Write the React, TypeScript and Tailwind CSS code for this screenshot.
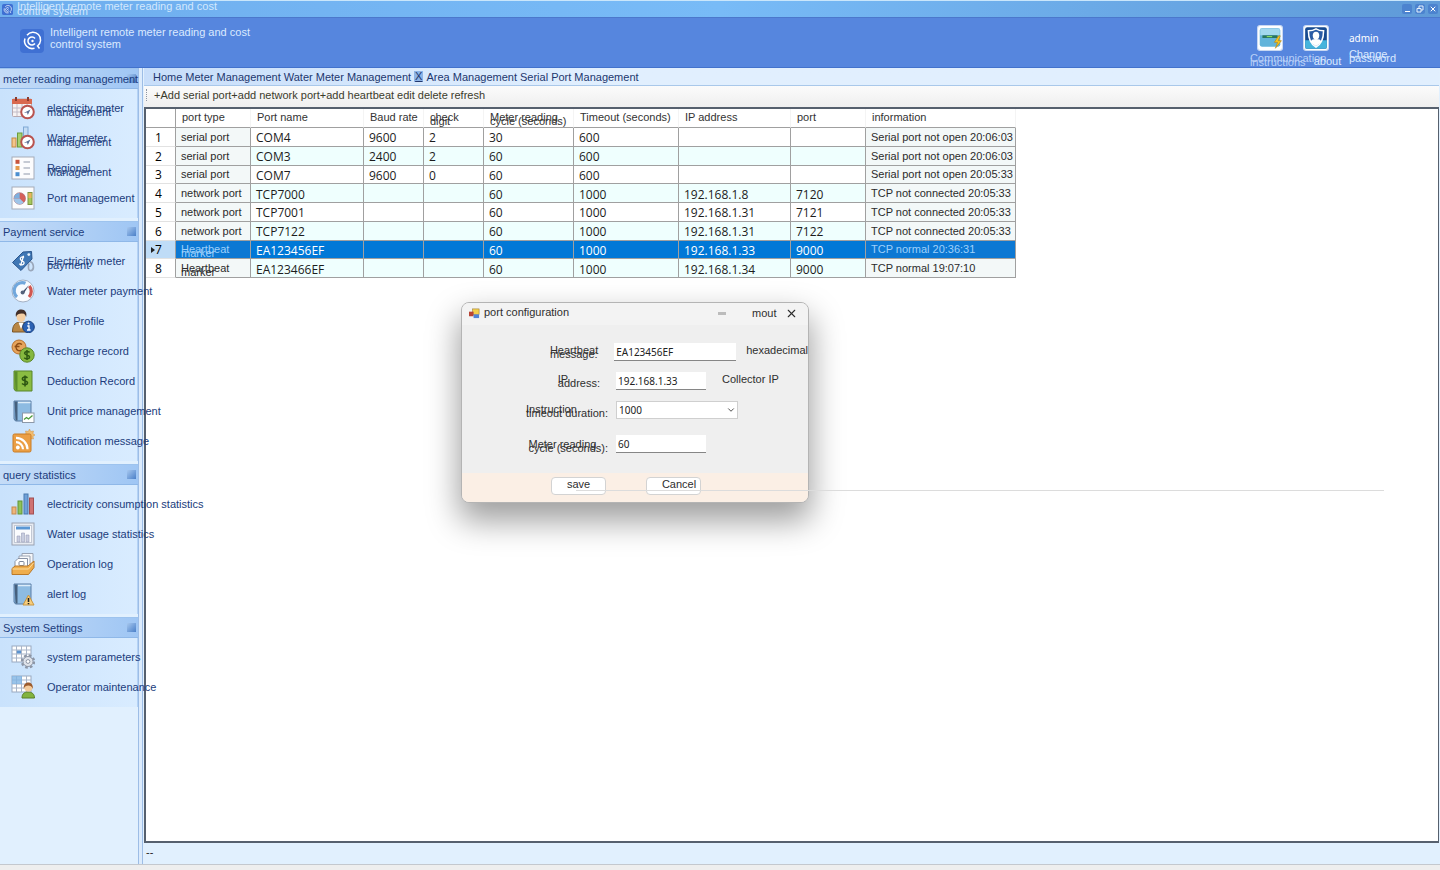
import React from 'react';
import { ChevronDown, X } from 'lucide-react';

type IconProps = { children: React.ReactNode; size?: string };

const Svg: React.FC<IconProps> = ({ children, size = 'size-6' }) => (
  <svg viewBox="0 0 24 24" className={`${size} shrink-0`} fill="none" aria-hidden="true">
    {children}
  </svg>
);

const Clock = () => (
  <>
    <circle cx="16.5" cy="16" r="6.3" fill="#fff" stroke="#b9534f" strokeWidth="2" />
    <path d="M12.8 17l6.6-3.4-2.6 5.4-.8-2.4z" fill="#5b6f96" />
  </>
);

const CalendarIcon = () => (
  <Svg>
    <rect x="1.5" y="3" width="19" height="17.5" rx="1" fill="#f7f3f3" stroke="#b7a9b0" />
    <path d="M1 3h20v5H1z" fill="#d9694f" />
    <path d="M5 1v4M17 1v4" stroke="#8d3b2d" strokeWidth="2" />
    <path d="M2 12h18M2 16h18M6 8v12M11 8v12M16 8v12" stroke="#c1bcc8" />
    <Clock />
  </Svg>
);

const BarsClockIcon = () => (
  <Svg>
    <rect x="1" y="12" width="4" height="9" fill="#f3c58b" stroke="#c58a44" />
    <rect x="6.5" y="7" width="4.5" height="14" fill="#a8d070" stroke="#6a9c3c" />
    <rect x="12.5" y="1" width="4.5" height="20" fill="#c4dcf4" stroke="#7fa8d4" />
    <Clock />
  </Svg>
);

const ListIcon = () => (
  <Svg>
    <rect x="1" y="1" width="22" height="22" fill="#fcfcfd" stroke="#a5abb8" />
    <rect x="4.5" y="3.8" width="4" height="4" fill="#c8553d" />
    <rect x="4.5" y="10" width="4" height="4" fill="#e59a4c" />
    <rect x="4.5" y="16.2" width="4" height="4" fill="#4c8fd0" />
    <path d="M12.5 6H19M12.5 12H19M12.5 18H19" stroke="#8f98aa" />
  </Svg>
);

const PieBarIcon = () => (
  <Svg>
    <rect x="1" y="1" width="22" height="22" fill="#fcfcfd" stroke="#a5abb8" />
    <circle cx="8.7" cy="12.5" r="5.8" fill="#d5605b" stroke="#a35f6c" strokeWidth=".6" />
    <path d="M8.7 12.5V6.700a5.800 5.800 0 0 0-5.800 5.800z" fill="#7eb0df" />
    <path d="M8.7 12.5H2.900a5.800 5.800 0 0 0 9.900 4.100z" fill="#9ec4e8" />
    <rect x="17" y="6.5" width="4" height="12" fill="#a6c85c" stroke="#7c9440" />
    <path d="M17.5 7h3v5h-3z" fill="#ecb25a" />
  </Svg>
);

const TagIcon = () => (
  <Svg>
    <path d="M19 12.500c4 1 4.500 8 1.500 9s-4-3-2.500-7" stroke="#9aa7ba" strokeWidth="1.600" />
    <path d="M1.500 13.500L12 3l8.500-.5L21 10 10 21.500z" fill="#3f77b5" stroke="#2a558c" />
    <circle cx="17.800" cy="5.600" r="1.400" fill="#e9f2fb" />
    <path d="M13 8.500c-2-1.200-4.300 0-3.500 2s4 1.500 3.600 3.600-3 2.400-4.800.7M12.600 6.800l-3 9.800" stroke="#fff" strokeWidth="1.300" />
  </Svg>
);

const GaugeIcon = () => (
  <Svg>
    <circle cx="12" cy="12" r="11" fill="#f8fbff" stroke="#a4b1c4" />
    <path d="M6 18A8.200 8.200 0 0 1 14.500 4.200" stroke="#71a7dc" strokeWidth="3.200" />
    <path d="M18.300 7a8.200 8.200 0 0 1-.3 11" stroke="#d0564f" strokeWidth="3.200" />
    <path d="M10.500 13.800L18 6l-5.500 9z" fill="#3f4c66" />
    <circle cx="11.600" cy="13.500" r="2" fill="#53617a" />
  </Svg>
);

const UserInfoIcon = () => (
  <Svg>
    <path d="M1.500 23c0-6 2-8.500 5-9.500h7c3.500 1 5 4 5 9.500z" fill="#b98745" stroke="#7a5527" />
    <path d="M7.500 13.500L10 20l2.800-6.500z" fill="#fff" />
    <ellipse cx="10" cy="7.500" rx="4.500" ry="5.500" fill="#f5cfa3" />
    <path d="M5 8C3.800 3 7 .3 10.500.5s5.800 3 4.600 7.500c-1-3-2-3.500-4.600-3.500S6 5 5 8z" fill="#43302a" />
    <circle cx="17.500" cy="18" r="5.800" fill="#2c62b4" stroke="#173f80" />
    <path d="M16.300 17h1.700v4M16 21h3.600" stroke="#fff" strokeWidth="1.300" />
    <circle cx="17.600" cy="14.600" r="1" fill="#fff" />
  </Svg>
);

const CoinsIcon = () => (
  <Svg>
    <circle cx="8" cy="8" r="7" fill="#e6a45c" stroke="#b9702c" />
    <path d="M11 5.500c-4-2.600-6.300.5-6 3s3 4.200 5.500 2.500M3.600 7.500H8.500" stroke="#8d4c15" strokeWidth="1.400" />
    <circle cx="16" cy="16" r="7.200" fill="#86b83f" stroke="#5b8726" />
    <path d="M18.600 13.300c-2-1.600-5-.8-5 1s5 1.700 5 3.700-3.400 2.500-5.400.7M16 11v10" stroke="#2f5a12" strokeWidth="1.500" />
  </Svg>
);

const GreenBookIcon = () => (
  <Svg>
    <path d="M3 2h18v20H4.500L3 20z" fill="#8abc42" stroke="#58852a" />
    <path d="M3.500 2.500h3v19h-2z" fill="#5d8f2c" />
    <path d="M16.500 8.800c-2-1.600-5.200-.8-5.200 1.100s5.300 1.800 5.300 3.900-3.600 2.500-5.600.7M14 6.500v11" stroke="#2d5612" strokeWidth="1.600" />
  </Svg>
);

const BlueBook = () => (
  <>
    <path d="M3 2h17v20H4.500L3 20z" fill="#8dbbe2" stroke="#5a7da5" />
    <path d="M3.500 2.500h3v19h-2z" fill="#46607d" />
    <path d="M7 3.500h12.500" stroke="#dcecf9" strokeWidth="1.500" />
  </>
);

const BookChartIcon = () => (
  <Svg>
    <BlueBook />
    <rect x="11.500" y="14" width="11.500" height="9.500" fill="#fff" stroke="#8c98a8" />
    <path d="M13 20.500l2.500-2 2 1.500 4-3.500" stroke="#4c9a3a" strokeWidth="1.300" />
  </Svg>
);

const BookAlertIcon = () => (
  <Svg>
    <BlueBook />
    <path d="M17.500 13l5.500 10H12z" fill="#f7cd7c" stroke="#c99640" strokeLinejoin="round" />
    <path d="M17.500 16v4M17.500 21v1.200" stroke="#222" strokeWidth="1.600" />
  </Svg>
);

const RssIcon = () => (
  <Svg>
    <path d="M18.500 0l1.200 2.500L22.500 2l-.6 2.600L24 6l-2.100 1.400.6 2.600-2.800-.5-1.200 2.500-1.200-2.500-2.800.5.600-2.600L13 6l2.100-1.400-.6-2.600 2.800.5z" fill="#f1bd70" stroke="#d3913c" strokeWidth=".5" />
    <rect x="2" y="5" width="18" height="18" rx="1.500" fill="#eb9f45" stroke="#c97c26" />
    <circle cx="6.800" cy="18.500" r="1.900" fill="#fff" />
    <path d="M5 13.200a7 7 0 0 1 7 7M5 8.800a11.500 11.500 0 0 1 11.500 11.500" stroke="#fff" strokeWidth="2.200" />
  </Svg>
);

const BarsIcon = () => (
  <Svg>
    <rect x="1" y="15" width="4" height="7" fill="#eeb57c" stroke="#c58a4c" />
    <rect x="7" y="9" width="4" height="13" fill="#8fc257" stroke="#5f933a" />
    <rect x="13" y="2" width="4" height="20" fill="#6fa0d8" stroke="#4878ae" />
    <rect x="18.500" y="6" width="4" height="16" fill="#cf7272" stroke="#a24f52" />
  </Svg>
);

const ReportIcon = () => (
  <Svg>
    <rect x="1" y="1" width="22" height="22" fill="#e7ebf2" stroke="#9aa2b2" />
    <rect x="3.500" y="3.500" width="17" height="17" fill="#fbfcfe" stroke="#c2c8d4" />
    <path d="M5 6h14" stroke="#5b97d4" strokeWidth="3" />
    <path d="M6 14h3v6H6zM10.500 11h3v9h-3zM15 13h3v7h-3z" fill="#c9cee0" stroke="#9aa0b8" strokeWidth=".6" />
  </Svg>
);

const TrayIcon = () => (
  <Svg>
    <path d="M11 1.500h11V13H11z" fill="#f5f7fa" stroke="#9aa3b3" />
    <path d="M8 4h11v11H8z" fill="#f9fafc" stroke="#9aa3b3" />
    <path d="M7 6.500h9.500V16H4V9.500z" fill="#fff" stroke="#8993a6" />
    <rect x="8" y="9.500" width="5" height="4" rx="1" stroke="#7d879b" />
    <path d="M1 16.500L4 14h13l6-5v6.500l-5.500 7H1z" fill="#efad4c" stroke="#b9792a" />
    <path d="M1.500 17H17.500l5-6" stroke="#fbdc9d" />
  </Svg>
);

const Grid = () => (
  <>
    <rect x="1" y="1" width="19" height="16" fill="#fff" stroke="#9aa9c0" />
    <path d="M1 5h19M1 9h19M1 13h19M5.500 1v16M10.500 1v16M15.500 1v16" stroke="#a9b5c8" />
  </>
);

const GridGearIcon = () => (
  <Svg>
    <Grid />
    <path d="M6 5.500h4v3H6z" fill="#5b93cf" />
    <circle cx="17" cy="16.500" r="6" stroke="#8c95a5" strokeWidth="2.400" strokeDasharray="2.600 2.100" />
    <circle cx="17" cy="16.500" r="5" fill="#dfe3ea" stroke="#8c95a5" />
    <circle cx="17" cy="16.500" r="1.900" fill="#fff" stroke="#8c95a5" />
  </Svg>
);

const GridUserIcon = () => (
  <Svg>
    <Grid />
    <path d="M1 1h10v8H1z" fill="#7fb4e3" fillOpacity=".8" />
    <path d="M11 23c0-4 2-6 6-6s6.500 2 6.500 6z" fill="#82b33f" stroke="#587f26" />
    <circle cx="17.300" cy="12.500" r="4" fill="#f4cb9b" />
    <path d="M12.800 14c-.5-4 1.500-6.500 4.500-6.500s5 2.500 4.500 6.500c-1-3-2.500-3.500-4.500-3.500S13.500 11 12.800 14z" fill="#9c5b2c" />
  </Svg>
);

const LogoIcon = ({ size }: { size: string }) => (
  <Svg size={size}>
    <rect width="24" height="24" rx="4" fill="#3f70d3" />
    <path d="M7 6.200A7.600 7.600 0 1 1 17.500 17l2 2.500M5 9.500A7.600 7.600 0 0 0 14.500 19.200" stroke="#fff" strokeWidth="1.500" />
    <path d="M15 14.600A4 4 0 1 1 15 9.400" stroke="#fff" strokeWidth="1.500" />
    <circle cx="12.500" cy="12" r="1.200" fill="#fff" />
  </Svg>
);

const CommIcon = () => (
  <Svg size="size-[26px]">
    <rect x=".5" y=".5" width="23" height="23" rx="2.500" fill="#fff" stroke="#c8d8f2" />
    <rect x="2.500" y="3" width="19" height="17" rx="2" fill="#62b4da" />
    <path d="M3 3.500h18v6H3z" fill="#a2d8ee" />
    <rect x="5" y="9.500" width="14" height="2.500" fill="#28765f" />
    <path d="M9 10.700h5" stroke="#8fe064" />
    <path d="M20 10l-4 6h3l-2 5.500 5.500-7h-3l2-4.500z" fill="#f9c71f" stroke="#b98410" strokeWidth=".6" />
  </Svg>
);

const ShieldIcon = () => (
  <Svg size="size-[26px]">
    <rect x=".5" y=".5" width="23" height="23" rx="2.500" fill="#fff" stroke="#c8d8f2" />
    <rect x="2" y="2" width="20" height="20" rx="2" fill="#174a8f" />
    <path d="M2 14h20v6a2 2 0 0 1-2 2H4a2 2 0 0 1-2-2z" fill="#45b4dc" />
    <path d="M12 3.500c2.500 1.500 5 1.800 7 1.800 0 7-1.500 12-7 15.200-5.500-3.200-7-8.200-7-15.200 2 0 4.500-.3 7-1.800z" fill="#2b5ca5" stroke="#fff" strokeWidth="1.400" />
    <ellipse cx="12" cy="9.800" rx="3" ry="3.600" fill="#fff" />
    <path d="M7 16c.5-2.500 2.500-3 5-3s4.500.5 5 3L12 19.500z" fill="#fff" />
  </Svg>
);

const Stacked: React.FC<{ text: string }> = ({ text }) => (
  <span className="block h-1 leading-[4px] whitespace-pre text-left">{text}</span>
);

const sections = [
  {
    title: 'meter reading management',
    items: [
      { label: 'electricity meter\nmanagement', icon: <CalendarIcon /> },
      { label: 'Water meter\nmanagement', icon: <BarsClockIcon /> },
      { label: 'Regional\nManagement', icon: <ListIcon /> },
      { label: 'Port management', icon: <PieBarIcon /> },
    ],
  },
  {
    title: 'Payment service',
    items: [
      { label: 'Electricity meter\npayment', icon: <TagIcon /> },
      { label: 'Water meter payment', icon: <GaugeIcon /> },
      { label: 'User Profile', icon: <UserInfoIcon /> },
      { label: 'Recharge record', icon: <CoinsIcon /> },
      { label: 'Deduction Record', icon: <GreenBookIcon /> },
      { label: 'Unit price management', icon: <BookChartIcon /> },
      { label: 'Notification message', icon: <RssIcon /> },
    ],
  },
  {
    title: 'query statistics',
    items: [
      { label: 'electricity consumption statistics', icon: <BarsIcon /> },
      { label: 'Water usage statistics', icon: <ReportIcon /> },
      { label: 'Operation log', icon: <TrayIcon /> },
      { label: 'alert log', icon: <BookAlertIcon /> },
    ],
  },
  {
    title: 'System Settings',
    items: [
      { label: 'system parameters', icon: <GridGearIcon /> },
      { label: 'Operator maintenance', icon: <GridUserIcon /> },
    ],
  },
];

const columns = [
  { label: 'port type', width: 'w-[75px]' },
  { label: 'Port name', width: 'w-[113px]' },
  { label: 'Baud rate', width: 'w-[60px]' },
  { label: 'check\ndigit', width: 'w-[60px]' },
  { label: 'Meter reading\ncycle (seconds)', width: 'w-[90px]' },
  { label: 'Timeout (seconds)', width: 'w-[105px]' },
  { label: 'IP address', width: 'w-[112px]' },
  { label: 'port', width: 'w-[75px]' },
  { label: 'information', width: 'w-[150px]' },
];

const rows = [
  ['serial port', 'COM4', '9600', '2', '30', '600', '', '', 'Serial port not open 20:06:03'],
  ['serial port', 'COM3', '2400', '2', '60', '600', '', '', 'Serial port not open 20:06:03'],
  ['serial port', 'COM7', '9600', '0', '60', '600', '', '', 'Serial port not open 20:05:33'],
  ['network port', 'TCP7000', '', '', '60', '1000', '192.168.1.8', '7120', 'TCP not connected 20:05:33'],
  ['network port', 'TCP7001', '', '', '60', '1000', '192.168.1.31', '7121', 'TCP not connected 20:05:33'],
  ['network port', 'TCP7122', '', '', '60', '1000', '192.168.1.31', '7122', 'TCP not connected 20:05:33'],
  ['Heartbeat\nmarker', 'EA123456EF', '', '', '60', '1000', '192.168.1.33', '9000', 'TCP normal 20:36:31'],
  ['Heartbeat\nmarker', 'EA123466EF', '', '', '60', '1000', '192.168.1.34', '9000', 'TCP normal 19:07:10'],
];

const SELECTED = 6;

const TitleBar = () => (
  <div className="h-[17px] shrink-0 flex items-center justify-between pl-[2px] pr-[2px] border-t border-[#c9e6fb] bg-linear-to-r from-[#6faeee] via-[#78bbf7] to-[#5f9ad8]">
    <div className="flex items-center gap-1 text-[#d3e8fd]">
      <LogoIcon size="size-[11px]" />
      <div className="leading-[5px] whitespace-pre">{'Intelligent remote meter reading and cost\ncontrol system'}</div>
    </div>
    <div className="flex gap-[3px]">
      <button aria-label="Minimize" className="size-[10px] rounded-xs bg-[#4c83cf] flex items-end justify-center pb-[2px]">
        <span className="w-[5px] h-px bg-white" />
      </button>
      <button aria-label="Restore" className="size-[10px] rounded-xs bg-[#4c83cf] flex items-center justify-center">
        <svg viewBox="0 0 10 10" className="size-[10px]" fill="none" stroke="#e6f1fd">
          <path d="M2 4.500h4v3.500H2zM4 4.500V2h4v4H6" />
        </svg>
      </button>
      <button aria-label="Close" className="size-[10px] rounded-xs bg-[#4c83cf] flex items-center justify-center text-white">
        <X size={8} strokeWidth={3} />
      </button>
    </div>
  </div>
);

const Header = () => (
  <header className="h-[51px] shrink-0 flex justify-between bg-[#5686de] border-t border-b border-t-[#4b78cc] border-b-[#4272cc] text-[#dbeafe]">
    <div className="flex items-start gap-[6px] pl-5 pt-2">
      <div className="pt-[3px]">
        <LogoIcon size="size-6" />
      </div>
      <div className="leading-[12px] whitespace-pre">{'Intelligent remote meter reading and cost\ncontrol system'}</div>
    </div>
    <div className="flex items-start pr-11 pt-[7px]">
      <button className="w-[46px] flex flex-col gap-[5px] text-[#b9d0f7]">
        <span className="pl-[7px]">
          <CommIcon />
        </span>
        <Stacked text={'Communication\ninstructions'} />
      </button>
      <button className="w-[53px] flex flex-col gap-2">
        <span className="pl-[7px]">
          <ShieldIcon />
        </span>
        <span className="block h-1 leading-[4px] pl-[10px]">about</span>
      </button>
      <div className="flex flex-col items-start gap-[7px] pt-[6px]">
        <span className="leading-[14px] text-[10px] font-['Noto_Sans',sans-serif] text-white">admin</span>
        <button>
          <Stacked text={'Change\npassword'} />
        </button>
      </div>
    </div>
  </header>
);

const Sidebar = () => (
  <nav className="w-[138px] shrink-0 relative z-10 flex flex-col gap-[3px] bg-[#e1f0fe] text-[#203c7c]">
    {sections.map((section) => (
      <section key={section.title}>
        <h2 className="h-[21px] flex items-center justify-between pl-[3px] pr-[2px] border-t border-b border-t-[#9dc3ee] border-b-[#8fb8e8] bg-linear-to-r from-[#c5dcf7] to-[#9fc6f4]">
          <span className="relative z-10 w-0 grow whitespace-nowrap">{section.title}</span>
          <span className="size-[9px] bg-linear-to-br from-[#a7c8ef] to-[#4b80c8]" />
        </h2>
        <ul className="pt-1 pb-[5px] border-r border-[#b5d3f5] bg-linear-to-r from-[#c9e2fc] to-[#d9ecff]">
          {section.items.map((item) => (
            <li key={item.label}>
              <button className="h-[30px] flex items-center gap-3 pl-[11px]">
                {item.icon}
                <Stacked text={item.label} />
              </button>
            </li>
          ))}
        </ul>
      </section>
    ))}
  </nav>
);

const Tabs = () => (
  <div className="h-[18px] flex items-center gap-[3px] pl-[9px] border-b border-[#a9c8ea] bg-linear-to-r from-[#c8defa] to-[#e1effe] to-35% text-[#22376e]">
    <button>Home</button>
    <button>Meter Management</button>
    <button>Water Meter Management</button>
    <button className="px-px bg-[#8db4e6] leading-[11px] underline">X</button>
    <button>Area Management</button>
    <button>Serial Port Management</button>
  </div>
);

const Toolbar = () => (
  <div className="h-[21px] flex items-center pb-1 bg-linear-to-b from-[#fbfbfb] to-[#efefef] text-[#3b3b2c]">
    <span className="w-[10px] pl-[2px]">
      <span className="block h-3 w-0 border-l border-dotted border-[#8d96a5]" />
    </span>
    <button>+Add serial port</button>
    <button>+add network port</button>
    <button>+add heartbeat</button>
    <div className="flex gap-[3px] pl-[3px]">
      <button>edit</button>
      <button>delete</button>
      <button>refresh</button>
    </div>
  </div>
);

const cellStyle = (row: number, col: number) => {
  if (row === SELECTED) return col === 0 || col === 8 ? 'bg-[#0c78d3] text-[#9fd0fb]' : 'bg-[#0078d7] text-white';
  if (col === 0 || col === 8) return 'bg-[#f3f8f8] text-[#2b2b2b]';
  return row % 2 ? 'bg-[#effffe] text-[#1c1c1c]' : 'bg-white text-[#1c1c1c]';
};

const PortTable = () => (
  <table className="table-fixed w-[870px] h-[169px] border-separate border-spacing-0 text-left">
    <thead>
      <tr className="h-[19px]">
        <th className="w-[30px] p-0 border-r border-b border-[#a0a0a0]" aria-label="row" />
        {columns.map((column) => (
          <th key={column.label} className={`${column.width} p-0 pl-[6px] pb-[2px] font-normal border-b border-r border-r-[#f4f4f4] border-b-[#a0a0a0] text-[#333]`}>
            <Stacked text={column.label} />
          </th>
        ))}
      </tr>
    </thead>
    <tbody>
      {rows.map((row, r) => (
        <tr key={row[1]} className="h-[18px]">
          <td className={`p-0 border-r border-b border-r-[#a0a0a0] border-b-[#e2e2e2] font-['Open_Sans',sans-serif] text-[12px] leading-[14px] ${r === SELECTED ? 'bg-[#bfdcf7]' : 'bg-white'}`}>
            <div className="flex items-center pt-[2px]">
              <span className="w-[9px] flex justify-end">
                {r === SELECTED && (
                  <svg viewBox="0 0 4 6" className="w-1 h-[6px]">
                    <path d="M0 0l4 3-4 3z" fill="#222" />
                  </svg>
                )}
              </span>
              {r + 1}
            </div>
          </td>
          {row.map((value, c) => (
            <td key={c} className={`p-0 pl-[5px] border-r border-b border-[#a0a0a0] whitespace-nowrap ${cellStyle(r, c)}`}>
              {c === 0 || c === 8 ? (
                <Stacked text={value} />
              ) : (
                <div className="pt-[3px] font-['Open_Sans',sans-serif] text-[12px] leading-[14px]">{value}</div>
              )}
            </td>
          ))}
        </tr>
      ))}
    </tbody>
  </table>
);

const fieldClass = "h-[18px] px-[2px] bg-white border-b border-[#868686] font-['Noto_Sans',sans-serif] text-[10px] text-[#222]";

const PortDialog = () => (
  <div
    role="dialog"
    aria-label="port configuration"
    className="absolute left-[315px] top-[193px] w-[348px] rounded-lg border border-[#b4b4b4] bg-[#efefef] text-[#2e2e2e] overflow-hidden shadow-[0_16px_32px_2px_rgba(0,0,0,0.38)]"
  >
    <div className="h-[22px] flex items-center bg-[#f3f3f3] pl-[7px] pb-[2px]">
      <svg viewBox="0 0 12 12" className="size-[11px]">
        <rect x="4" y="1" width="7" height="6" fill="#f3cf4d" stroke="#96762a" strokeWidth=".6" />
        <rect x="0" y="4" width="5" height="5" fill="#b84434" />
        <rect x="5" y="7" width="6" height="4" fill="#4f83d6" />
      </svg>
      <span className="grow pl-1 pb-[2px]">port configuration</span>
      <button aria-label="Minimize" className="w-[34px]">
        <span className="block w-2 h-[3px] bg-[#bcbcbc]" />
      </button>
      <button className="w-[33px] text-left">mout</button>
      <button aria-label="Close" className="w-[23px]">
        <X size={13} strokeWidth={2} />
      </button>
    </div>
    <form>
      <div className="flex flex-col pt-[18px] h-[148px]">
        <div className="h-[29px] flex items-start">
          <label htmlFor="heartbeat" className="w-[154px] flex justify-end pr-4 pt-[5px]">
            <Stacked text={'Heartbeat\nmessage:'} />
          </label>
          <input id="heartbeat" defaultValue="EA123456EF" className={`${fieldClass} w-[122px]`} />
          <span className="pl-[10px] leading-[14px]">hexadecimal</span>
        </div>
        <div className="h-[29px] flex items-start">
          <label htmlFor="ip" className="w-[154px] flex justify-end pr-4 pt-[5px]">
            <Stacked text={'IP\naddress:'} />
          </label>
          <input id="ip" defaultValue="192.168.1.33" className={`${fieldClass} w-[90px]`} />
          <span className="pl-4 leading-[14px]">Collector IP</span>
        </div>
        <div className="h-[34px] flex items-start">
          <label htmlFor="timeout" className="w-[154px] flex justify-end pr-2 pt-[6px]">
            <Stacked text={'Instruction\ntimeout duration:'} />
          </label>
          <div className="relative">
            <select id="timeout" defaultValue="1000" className="appearance-none block w-[122px] h-[18px] px-[2px] bg-white border border-[#cfcfcf] font-['Noto_Sans',sans-serif] text-[10px] text-[#222]">
              <option>1000</option>
              <option>2000</option>
            </select>
            <ChevronDown size={10} className="absolute right-[2px] top-1 pointer-events-none" />
          </div>
        </div>
        <div className="flex items-start">
          <label htmlFor="cycle" className="w-[154px] flex justify-end pr-2 pt-[7px]">
            <Stacked text={'Meter reading\ncycle (seconds):'} />
          </label>
          <input id="cycle" defaultValue="60" className={`${fieldClass} w-[90px]`} />
        </div>
      </div>
      <div className="h-[29px] flex items-start gap-10 pl-[89px] pt-1 bg-[#fbefe5]">
        <button type="button" className="w-[55px] h-[18px] pb-[3px] leading-[13px] bg-white border border-[#d3d3d3] rounded-sm">save</button>
        <button type="button" className="w-[55px] h-[18px] pb-[3px] pl-[11px] leading-[13px] bg-white border border-[#d3d3d3] rounded-sm">Cancel</button>
      </div>
    </form>
  </div>
);

export default function App() {
  return (
    <div className="h-screen flex flex-col overflow-hidden bg-[#e1f0fe] font-['Liberation_Sans',Arial,sans-serif] text-[11px] leading-[14px]">
      <TitleBar />
      <Header />
      <div className="grow min-h-0 flex">
        <Sidebar />
        <div className="w-[5px] shrink-0 border-l border-r border-[#9dbde6] bg-[#dcebfc]" />
        <main className="grow min-w-0 flex flex-col pl-px pr-px">
          <Tabs />
          <Toolbar />
          <div className="relative grow bg-white border-2 border-r border-[#56606e]">
            <PortTable />
            <PortDialog />
            <div className="absolute left-[430px] right-[54px] top-[381px] h-px bg-[#dcdcdc]" />
          </div>
          <div className="h-[21px] shrink-0 pl-[2px] pt-[2px] text-[#222]">--</div>
        </main>
      </div>
      <footer className="h-[6px] shrink-0 border-t border-[#c4c8ce] bg-[#eeeeee]" />
    </div>
  );
}
